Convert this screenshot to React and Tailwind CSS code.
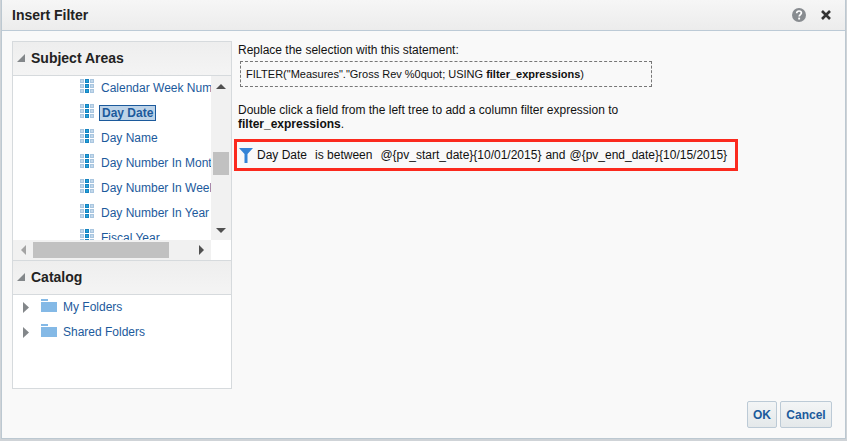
import { useState } from "react";

const columns = [
  "Calendar Week Number",
  "Day Date",
  "Day Name",
  "Day Number In Month",
  "Day Number In Week",
  "Day Number In Year",
  "Fiscal Year",
];

const folders = ["My Folders", "Shared Folders"];

function ColumnIcon() {
  return (
    <svg width="14" height="14" viewBox="0 0 14 14" className="mb-1 shrink-0" shapeRendering="crispEdges" aria-hidden="true">
      {[0, 5, 10].map((x) =>
        [0, 5, 10].map((y) => (
          <g key={`${x}-${y}`}>
            <rect x={x} y={y} width="4" height="4" fill={x === 5 ? "#1583c0" : "#a9c6e0"} />
            <rect x={x + 1} y={y + 1} width="2" height="2" fill={x === 5 ? "#22a0d8" : "#c3d8ea"} />
          </g>
        ))
      )}
    </svg>
  );
}

function FolderIcon() {
  return (
    <svg width="16" height="13" viewBox="0 0 16 13" className="mb-0.5 shrink-0" shapeRendering="crispEdges" aria-hidden="true">
      <path d="M0 0h7v2H0zM0 3h16v10H0z" fill="#84b9e6" />
    </svg>
  );
}

function SectionHeader({ title }) {
  return (
    <h2 className="flex h-[34px] shrink-0 items-center border-b border-[#d6dadd] bg-linear-to-b from-[#eeeeee] to-[#f4f4f4] pb-0.5 pl-1 text-sm font-bold text-[#222222]">
      <button type="button" className="flex items-center gap-1.5">
        <svg width="8" height="8" viewBox="0 0 8 8" aria-hidden="true">
          <path d="M8 0v8H0z" fill="#83878a" />
        </svg>
        {title}
      </button>
    </h2>
  );
}

function Arrow({ d, w, h, color, label }) {
  return (
    <button type="button" aria-label={label} className="flex size-5 shrink-0 items-center justify-center">
      <svg width={w} height={h} viewBox={`0 0 ${w} ${h}`} aria-hidden="true">
        <path d={d} fill={color} />
      </svg>
    </button>
  );
}

export default function App() {
  const [selected, setSelected] = useState("Day Date");

  return (
    <div className="flex min-h-screen flex-col bg-[#cfd3d7] pr-px pb-0.5 pl-px font-['Liberation_Sans',Arial,sans-serif] text-xs text-[#111111]">
      <div role="dialog" aria-label="Insert Filter" className="flex flex-1 flex-col border border-t-0 border-[#bcc8d1] bg-[#f9f9f9]">
        <header className="flex h-[31px] items-center justify-between border-b border-[#bccad6] bg-linear-to-b from-[#f6f6f6] to-[#ececec] pr-3.5 pl-2.5">
          <h1 className="text-sm font-bold text-[#222222]">Insert Filter</h1>
          <div className="flex items-center gap-[15px]">
            <button type="button" aria-label="Help">
              <svg width="14" height="14" viewBox="0 0 14 14" aria-hidden="true">
                <circle cx="7" cy="7" r="7" fill="#888c90" />
                <path d="M4.7 5.2C4.7 3.7 5.7 3 7 3s2.4.8 2.4 2.1C9.4 6.5 7.2 6.7 7.2 8.5" fill="none" stroke="#fff" strokeWidth="1.7" />
                <rect x="6.2" y="9.6" width="1.9" height="1.9" fill="#fff" />
              </svg>
            </button>
            <button type="button" aria-label="Close">
              <svg width="10" height="10" viewBox="0 0 10 10" aria-hidden="true">
                <path d="M1 1l8 8M9 1L1 9" stroke="#333333" strokeWidth="2.6" />
              </svg>
            </button>
          </div>
        </header>

        <div className="flex flex-1 gap-1.5 pt-2.5 pl-2.5">
          <aside className="flex w-[220px] shrink-0 flex-col self-start border border-[#d6dadd] bg-white text-[#1c5a9c]">
            <SectionHeader title="Subject Areas" />
            <div className="flex h-[164px]">
              <ul className="min-w-0 flex-1 overflow-hidden pl-[67px]">
                {columns.map((name) => (
                  <li key={name} className="flex h-[25px] items-center gap-[5px] pb-0.5">
                    <ColumnIcon />
                    <button
                      type="button"
                      onClick={() => setSelected(name)}
                      className={
                        name === selected
                          ? "border border-[#1c5a9c] bg-[#bdd3e8] px-0.5 leading-[14px] font-bold whitespace-nowrap"
                          : "border border-transparent px-px leading-[14px] whitespace-nowrap"
                      }
                    >
                      {name}
                    </button>
                  </li>
                ))}
              </ul>
              <div className="flex w-5 shrink-0 flex-col items-center bg-[#f1f1f1]">
                <Arrow label="Scroll up" w={10} h={5} d="M5 0l5 5H0z" color="#505050" />
                <div className="mt-14 h-[23px] w-4 bg-[#c1c1c1]" />
                <div className="flex-1" />
                <Arrow label="Scroll down" w={10} h={5} d="M0 0h10L5 5z" color="#505050" />
              </div>
            </div>
            <div className="mr-5 flex h-5 items-center bg-[#f1f1f1]">
              <Arrow label="Scroll left" w={5} h={10} d="M5 0v10L0 5z" color="#a3a3a3" />
              <div className="h-4 w-[136px] bg-[#c1c1c1]" />
              <div className="flex-1" />
              <Arrow label="Scroll right" w={5} h={10} d="M0 0l5 5-5 5z" color="#505050" />
            </div>
            <div className="border-t border-[#d6dadd]">
              <SectionHeader title="Catalog" />
            </div>
            <ul className="h-[93px] pl-2.5">
              {folders.map((name) => (
                <li key={name} className="flex h-[25px] items-center pb-0.5">
                  <button type="button" aria-label={`Expand ${name}`} className="w-[18px] pt-0.5">
                    <svg width="6" height="11" viewBox="0 0 6 11" aria-hidden="true">
                      <path d="M0 0l6 5.5L0 11z" fill="#83878a" />
                    </svg>
                  </button>
                  <FolderIcon />
                  <button type="button" className="ml-1.5">{name}</button>
                </li>
              ))}
            </ul>
          </aside>

          <main className="min-w-0 pt-0.5">
            <p className="leading-[14px]">Replace the selection with this statement:</p>
            <div className="mt-1 ml-0.5 flex h-[26px] w-[412px] items-center border border-dashed border-[#777777] pl-[5px] text-[11px]">
              <p>
                FILTER("Measures"."Gross Rev %0quot; USING <b>filter_expressions</b>)
              </p>
            </div>
            <p className="mt-4 max-w-[412px] leading-[14px]">
              Double click a field from the left tree to add a column filter expression to <b>filter_expressions</b>.
            </p>
            <div className="mt-2 -ml-1 flex h-8 w-fit items-center border-3 border-[#fb2a1e] pr-1 pl-0.5 whitespace-nowrap">
              <svg width="14" height="15" viewBox="0 0 14 15" className="mr-1" aria-hidden="true">
                <path d="M0 0h14L8.5 6v9h-3V6z" fill="#3484d6" />
              </svg>
              <span className="mr-2">Day Date</span>
              <span className="mr-2">is between</span>
              <span className="mr-1">@{"{pv_start_date}{10/01/2015}"}</span>
              <span className="mr-1">and</span>
              <span className="mr-1">@{"{pv_end_date}{10/15/2015}"}</span>
            </div>
          </main>
        </div>

        <footer className="flex justify-end gap-[3px] pr-[13px] pb-2.5 font-bold text-[#1c5a9c]">
          <button type="button" className="h-[27px] min-w-[30px] rounded-xs border border-[#bccad6] bg-linear-to-b from-[#f3f5f6] to-[#e4e8ea]">OK</button>
          <button type="button" className="h-[27px] min-w-[52px] rounded-xs border border-[#bccad6] bg-linear-to-b from-[#f3f5f6] to-[#e4e8ea]">Cancel</button>
        </footer>
      </div>
    </div>
  );
}
